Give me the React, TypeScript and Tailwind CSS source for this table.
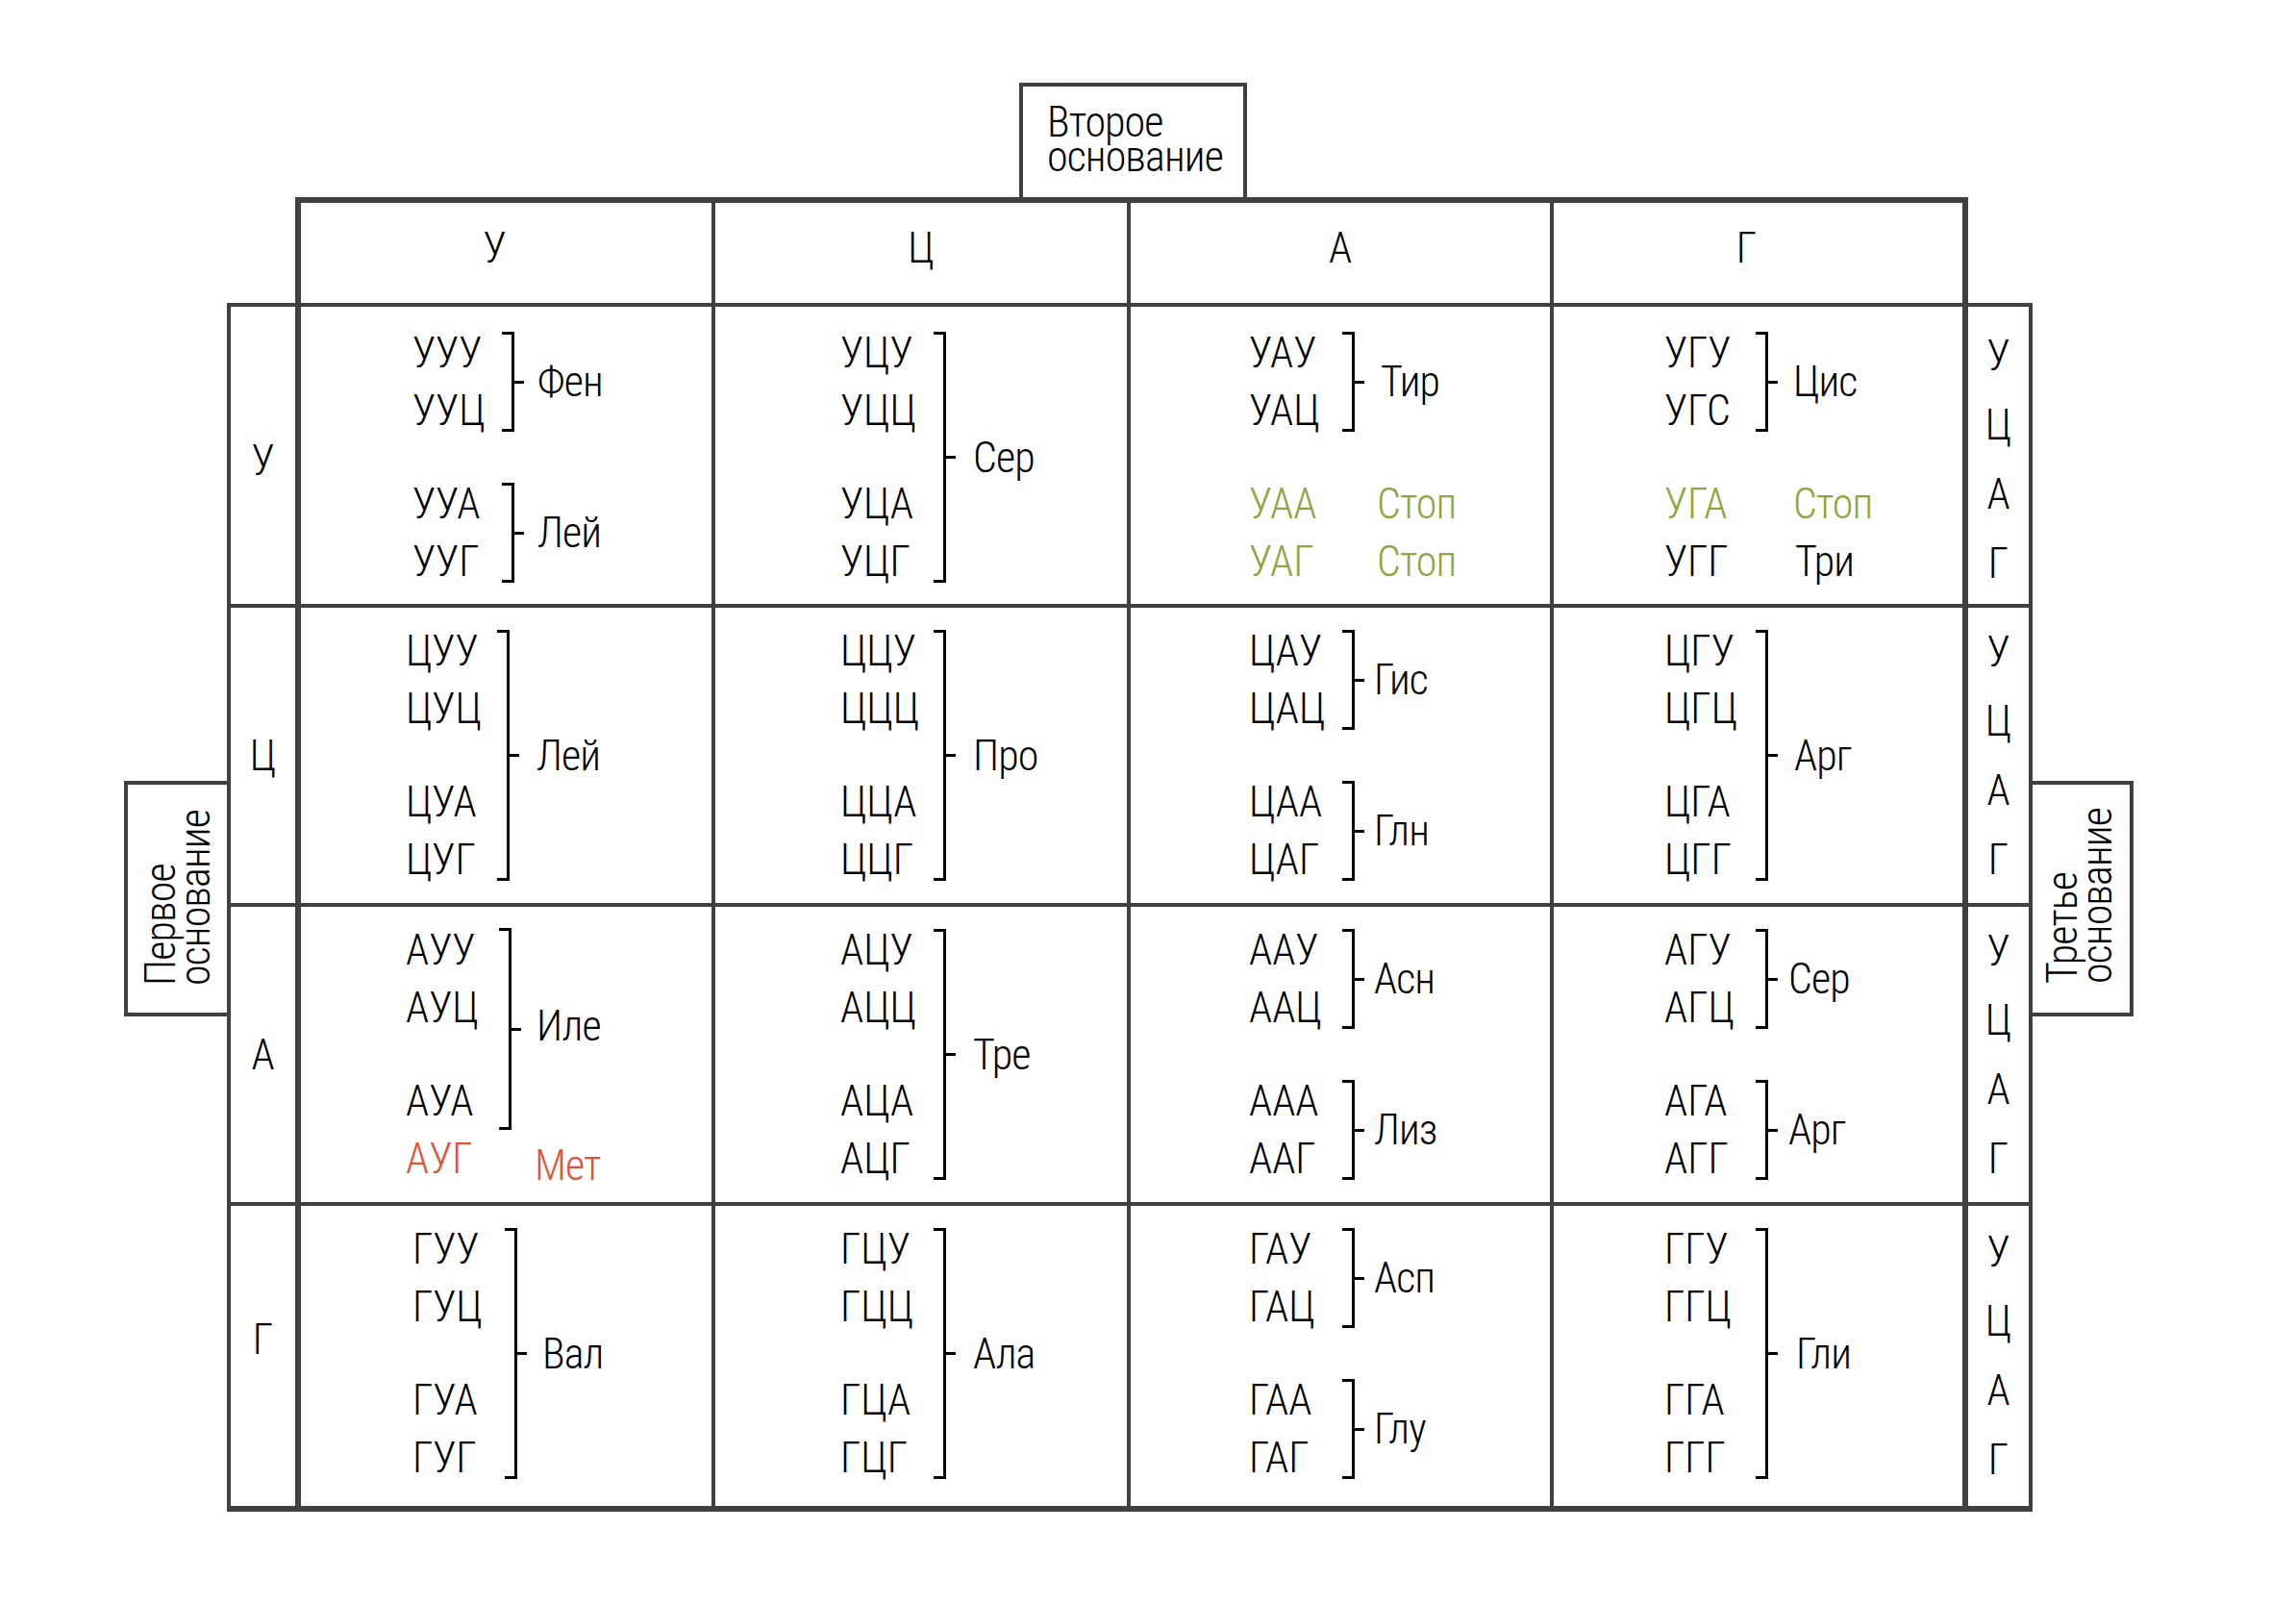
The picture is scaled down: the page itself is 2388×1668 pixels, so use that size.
import React from "react";

// genetic code table, second base across, first base down, third base on the right
type Tone = "black" | "green" | "red";

interface Group {
  codons: string[];
  label: string;
  bracket: boolean;
  lm: string; // margin before the label
  tone?: Tone;
  bm?: string; // bracket margins
  lp?: string; // extra label padding
}

interface CellDef {
  pl: string;
  cw: string;
  groups: Group[];
}

const toneClass: Record<Tone, string> = {
  black: "text-black",
  green: "text-[#8ca53c]",
  red: "text-[#e0533b]",
};

const four = (codons: string[], label: string, lm: string): Group[] => [
  { codons, label, bracket: true, lm },
];

const pairs = (a: string[], la: string, b: string[], lb: string, lm: string): Group[] => [
  { codons: a, label: la, bracket: true, lm },
  { codons: b, label: lb, bracket: true, lm },
];

const CELLS: CellDef[][] = [
  [
    { pl: "pl-[116px]", cw: "w-[93px]", groups: pairs(["УУУ", "УУЦ"], "Фен", ["УУА", "УУГ"], "Лей", "ml-[14px]") },
    { pl: "pl-[130px]", cw: "w-[97px]", groups: four(["УЦУ", "УЦЦ", "УЦА", "УЦГ"], "Сер", "ml-[18px]") },
    {
      pl: "pl-[123px]",
      cw: "w-[97px]",
      groups: [
        { codons: ["УАУ", "УАЦ"], label: "Тир", bracket: true, lm: "ml-[17px]" },
        { codons: ["УАА"], label: "Стоп", bracket: false, lm: "ml-[36px]", tone: "green" },
        { codons: ["УАГ"], label: "Стоп", bracket: false, lm: "ml-[36px]", tone: "green" },
      ],
    },
    {
      pl: "pl-[115px]",
      cw: "w-[95px]",
      groups: [
        { codons: ["УГУ", "УГС"], label: "Цис", bracket: true, lm: "ml-[16px]" },
        { codons: ["УГА"], label: "Стоп", bracket: false, lm: "ml-[39px]", tone: "green" },
        { codons: ["УГГ"], label: "Три", bracket: false, lm: "ml-[41px]" },
      ],
    },
  ],
  [
    { pl: "pl-[109px]", cw: "w-[95px]", groups: four(["ЦУУ", "ЦУЦ", "ЦУА", "ЦУГ"], "Лей", "ml-[18px]") },
    { pl: "pl-[130px]", cw: "w-[97px]", groups: four(["ЦЦУ", "ЦЦЦ", "ЦЦА", "ЦЦГ"], "Про", "ml-[18px]") },
    { pl: "pl-[123px]", cw: "w-[97px]", groups: pairs(["ЦАУ", "ЦАЦ"], "Гис", ["ЦАА", "ЦАГ"], "Глн", "ml-[10px]") },
    { pl: "pl-[115px]", cw: "w-[95px]", groups: four(["ЦГУ", "ЦГЦ", "ЦГА", "ЦГГ"], "Арг", "ml-[17px]") },
  ],
  [
    {
      pl: "pl-[109px]",
      cw: "w-[97px]",
      groups: [
        { codons: ["АУУ", "АУЦ", "АУА"], label: "Иле", bracket: true, lm: "ml-[16px]", bm: "mt-[7px] mb-0" },
        { codons: ["АУГ"], label: "Мет", bracket: false, lm: "ml-[37px]", tone: "red", lp: "pt-[7px]" },
      ],
    },
    { pl: "pl-[130px]", cw: "w-[97px]", groups: four(["АЦУ", "АЦЦ", "АЦА", "АЦГ"], "Тре", "ml-[18px]") },
    { pl: "pl-[123px]", cw: "w-[97px]", groups: pairs(["ААУ", "ААЦ"], "Асн", ["ААА", "ААГ"], "Лиз", "ml-[10px]") },
    { pl: "pl-[115px]", cw: "w-[95px]", groups: pairs(["АГУ", "АГЦ"], "Сер", ["АГА", "АГГ"], "Арг", "ml-[11px]") },
  ],
  [
    { pl: "pl-[116px]", cw: "w-[96px]", groups: four(["ГУУ", "ГУЦ", "ГУА", "ГУГ"], "Вал", "ml-[16px]") },
    { pl: "pl-[130px]", cw: "w-[97px]", groups: four(["ГЦУ", "ГЦЦ", "ГЦА", "ГЦГ"], "Ала", "ml-[18px]") },
    { pl: "pl-[123px]", cw: "w-[97px]", groups: pairs(["ГАУ", "ГАЦ"], "Асп", ["ГАА", "ГАГ"], "Глу", "ml-[10px]") },
    { pl: "pl-[115px]", cw: "w-[95px]", groups: four(["ГГУ", "ГГЦ", "ГГА", "ГГГ"], "Гли", "ml-[19px]") },
  ],
];

const BASES = ["У", "Ц", "А", "Г"];
const HEAD_PAD = ["pr-[24px]", "", "", "pr-[24px]"];
const ROW_PT = ["pt-[18px]", "pt-[15px]", "pt-[15px]", "pt-[15px]"];
const LEFT_PAD = ["pt-[10px]", "", "", "pb-[34px]"];
const RIGHT_PT = ["pt-[15px]", "pt-[10px]", "pt-[10px]", "pt-[12px]"];

function Bracket({ bm }: { bm?: string }) {
  return (
    <div className={`flex items-center self-stretch ${bm ?? "mt-[8px] mb-[8px]"}`}>
      <div className="w-[13px] self-stretch border-y-[3px] border-r-[3px] border-black" />
      <div className="w-[10px] h-[3px] bg-black" />
    </div>
  );
}

function Cell({ def, pt }: { def: CellDef; pt: string }) {
  let idx = 0;
  return (
    <div className={`bg-white flex flex-col ${pt} ${def.pl}`}>
      {def.groups.map((g, gi) => {
        const start = idx;
        idx += g.codons.length;
        const tone = toneClass[g.tone ?? "black"];
        return (
          <div key={gi} className={`flex ${start === 2 ? "mt-[37px]" : ""}`}>
            <div className={`flex flex-col shrink-0 ${def.cw}`}>
              {g.codons.map((c, ci) => (
                <div
                  key={c}
                  className={`h-[60px] leading-[60px] whitespace-nowrap ${tone} ${start + ci === 2 && ci > 0 ? "mt-[37px]" : ""}`}
                >
                  {c}
                </div>
              ))}
            </div>
            {g.bracket ? (
              <>
                <Bracket bm={g.bm} />
                <div className={`self-center leading-[44px] tracking-[-0.02em] whitespace-nowrap ${tone} ${g.lm}`}>
                  {g.label}
                </div>
              </>
            ) : (
              <div className={`leading-[60px] tracking-[-0.02em] whitespace-nowrap ${tone} ${g.lm} ${g.lp ?? ""}`}>
                {g.label}
              </div>
            )}
          </div>
        );
      })}
    </div>
  );
}

function SideLetters({ pt }: { pt: string }) {
  return (
    <div className={`bg-white flex flex-col items-center ${pt}`}>
      {BASES.map((b) => (
        <div key={b} className="h-[72px] leading-[72px]">
          {b}
        </div>
      ))}
    </div>
  );
}

export default function App() {
  return (
    <div className="w-[2388px] h-[1668px] bg-white text-black text-[44px] font-light font-['Roboto_Condensed',Roboto,sans-serif] overflow-hidden">
      <div className="pt-[86px] pl-[1060px]">
        <div className="w-[237px] h-[119px] border-4 border-b-0 border-[#404040] pl-[25px] pt-[19px] leading-[36px] tracking-[-0.02em]">
          Второе
          <br />
          основание
        </div>
      </div>

      <div className="flex items-start pl-[129px]">
        <div className="mt-[607px] w-[107px] h-[245px] border-y-4 border-l-4 border-[#404040] flex">
          <div className="[writing-mode:vertical-rl] rotate-180 w-[72px] h-full ml-[16px] pt-[28px] leading-[36px] tracking-[-0.02em] whitespace-nowrap">
            Первое
            <br />
            основание
          </div>
        </div>

        <div className="mt-[110px] w-[71px] grid grid-rows-[309px_307px_307px_312px] gap-[4px] bg-[#404040] pl-[4px] pt-[4px] pb-[6px]">
          {BASES.map((b, i) => (
            <div key={b} className={`bg-white flex items-center justify-center ${LEFT_PAD[i]}`}>
              {b}
            </div>
          ))}
        </div>

        <div className="w-[1740px] border-[6px] border-[#404040] bg-[#404040] grid grid-cols-[427px_428px_436px_425px] grid-rows-[104px_309px_307px_307px_312px] gap-[4px]">
          {BASES.map((b, i) => (
            <div key={b} className={`bg-white flex items-center justify-center pb-[10px] ${HEAD_PAD[i]}`}>
              {b}
            </div>
          ))}
          {CELLS.map((row, ri) => row.map((c, ci) => <Cell key={`${ri}-${ci}`} def={c} pt={ROW_PT[ri]} />))}
        </div>

        <div className="mt-[110px] w-[67px] grid grid-rows-[309px_307px_307px_312px] gap-[4px] bg-[#404040] pr-[4px] pt-[4px] pb-[6px]">
          {BASES.map((b, i) => (
            <SideLetters key={b} pt={RIGHT_PT[i]} />
          ))}
        </div>

        <div className="mt-[607px] w-[105px] h-[245px] border-y-4 border-r-4 border-[#404040] flex">
          <div className="[writing-mode:vertical-rl] rotate-180 w-[72px] h-full ml-[13px] pt-[30px] leading-[36px] tracking-[-0.02em] whitespace-nowrap">
            Третье
            <br />
            основание
          </div>
        </div>
      </div>
    </div>
  );
}
